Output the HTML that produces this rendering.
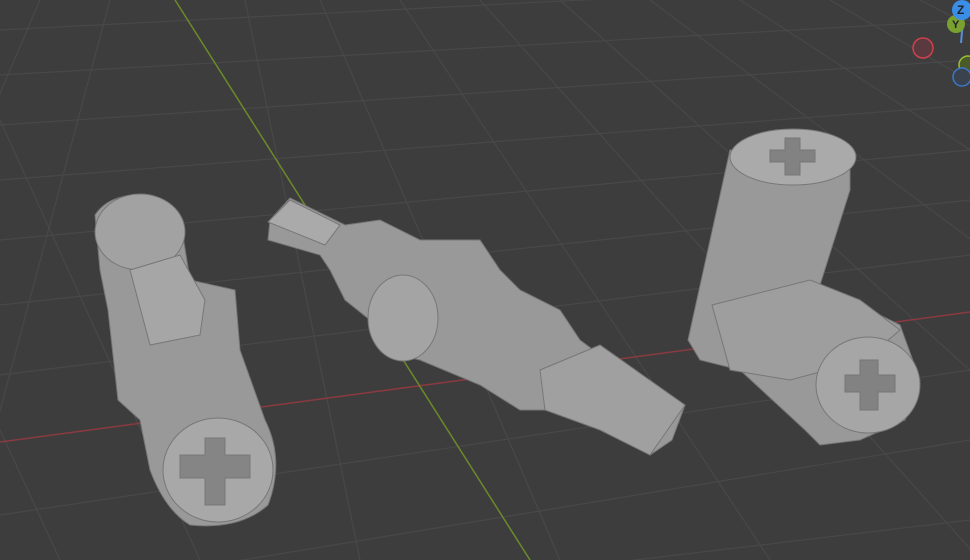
<!DOCTYPE html><html><head><style>html,body{margin:0;padding:0;background:#3d3d3d;overflow:hidden;width:970px;height:560px}svg{display:block;position:absolute;top:0;left:0}</style></head><body>
<svg width="970" height="560" viewBox="0 0 970 560" xmlns="http://www.w3.org/2000/svg">
<rect width="970" height="560" fill="#3d3d3d"/>
<g stroke="#484848" stroke-width="1.2" fill="none">
<path d="M0,30 L970,-20M0,75 L970,20M0,125 L970,60M0,180 L970,105M0,240 L970,150M0,305 L970,200M0,375 L970,255M0,515 L970,370M0,600 L970,440M300,600 L970,520"/>
<path d="M40,0 L-200,560M110,0 L-40,560M245,0 L360,560M320,0 L560,560M400,0 L770,560M480,0 L980,560M560,0 L1180,560M650,0 L1400,560M740,0 L1600,560M830,0 L1800,560M920,0 L2000,560M0,120 L200,560M-60,300 L60,560"/>
</g>
<path d="M0,442 L970,312" stroke="#8a3a40" stroke-width="1.5"/>
<path d="M175,0 L530,560" stroke="#6a8a2a" stroke-width="1.5"/>
<g fill="#999" stroke="#777" stroke-width="1">
<path d="M95,215 Q110,192 150,195 Q180,205 182,230 L190,280 L235,290 L240,350 L265,420 Q285,460 268,505 Q240,530 190,525 Q165,510 150,470 L140,420 L118,400 L108,310 L100,270 Z"/>
<ellipse cx="140" cy="232" rx="45" ry="38" fill="#a2a2a2"/>
<path d="M130,270 L180,255 L205,300 L200,335 L150,345 Z" fill="#a6a6a6"/>
<ellipse cx="218" cy="470" rx="55" ry="52" fill="#a8a8a8"/>
<path d="M180,455 L205,455 L205,438 L225,438 L225,455 L250,455 L250,478 L225,478 L225,505 L205,505 L205,478 L180,478 Z" fill="#858585"/>
</g>
<g fill="#999" stroke="#777" stroke-width="1">
<path d="M270,220 L290,198 L345,225 L380,220 L420,240 L480,240 L500,270 L520,290 L560,310 L580,340 L620,370 L685,405 L672,440 L650,455 L600,430 L570,410 L520,410 L480,385 L420,360 L400,355 L370,320 L345,300 L330,270 L320,255 L268,240 Z"/>
<ellipse cx="403" cy="318" rx="35" ry="43" fill="#a4a4a4"/>
<path d="M540,370 L600,345 L685,405 L650,455 L600,430 L545,410 Z" fill="#a0a0a0"/>
<path d="M268,222 L290,200 L340,225 L325,245 Z" fill="#aaa"/>
</g>
<g fill="#999" stroke="#777" stroke-width="1">
<path d="M730,150 L850,160 L850,190 L820,285 L900,325 L920,380 L905,420 L860,440 L820,445 L805,430 L740,370 L700,360 L688,340 Z"/>
<ellipse cx="793" cy="157" rx="63" ry="28" fill="#aaa"/>
<path d="M770,150 L785,150 L785,138 L800,138 L800,150 L815,150 L815,162 L800,162 L800,175 L785,175 L785,162 L770,162 Z" fill="#828282"/>
<path d="M712,305 L810,280 L860,300 L900,330 L865,360 L790,380 L730,370 Z" fill="#9e9e9e"/>
<ellipse cx="868" cy="385" rx="52" ry="48" fill="#a6a6a6"/>
<path d="M845,375 L860,375 L860,360 L878,360 L878,375 L895,375 L895,392 L878,392 L878,410 L860,410 L860,392 L845,392 Z" fill="#828282"/>
</g>
<line x1="961" y1="43" x2="963" y2="20" stroke="#5a8fd8" stroke-width="2"/>
<circle cx="923" cy="48" r="10" fill="#5a3a3e" stroke="#d0404f" stroke-width="1.5"/>
<circle cx="956" cy="24" r="9" fill="#7aa030"/>
<text x="952" y="28" font-family="Liberation Sans,sans-serif" font-size="11" font-weight="bold" fill="#222">Y</text>
<circle cx="962" cy="10" r="10" fill="#3a8ee8"/>
<text x="957" y="14" font-family="Liberation Sans,sans-serif" font-size="12" font-weight="bold" fill="#222">Z</text>
<circle cx="968" cy="65" r="9" fill="#4a5a2a" stroke="#9ac030" stroke-width="1.5"/>
<circle cx="962" cy="77" r="9" fill="#3a4250" stroke="#3a78c8" stroke-width="1.5"/>
</svg>
</body></html>
